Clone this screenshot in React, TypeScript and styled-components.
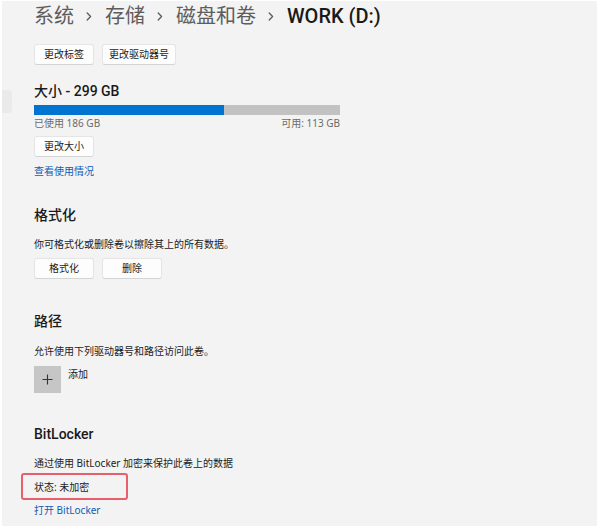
import styled, { createGlobalStyle } from "styled-components";

const GlobalStyle = createGlobalStyle`
  html, body {
    margin: 0;
    padding: 0;
    background: #f3f3f3;
  }
  * {
    box-sizing: border-box;
  }
`;

const headingFont = `"Roboto", "Noto Sans CJK SC", sans-serif`;

const Frame = styled.div`
  width: 600px;
  height: 526px;
  display: flex;
  background: #f3f3f3;
  border-top: 1px solid #ffffff;
  border-left: 2px solid #ffffff;
  border-right: 3px solid #ffffff;
  font-family: "Segoe UI", "Noto Sans", "Noto Sans CJK SC", sans-serif;
  color: #1b1b1b;
  overflow: hidden;
`;

const Sidebar = styled.nav`
  width: 10px;
  flex-shrink: 0;
  display: flex;
  flex-direction: column;
`;

const NavPill = styled.div`
  margin-top: 89px;
  width: 10px;
  height: 23px;
  background: #eaeaea;
  border-radius: 0 4px 4px 0;
`;

const Main = styled.main`
  flex: 1;
  padding-left: 22px;
  display: flex;
  flex-direction: column;
  align-items: flex-start;
`;

const Breadcrumb = styled.div`
  display: flex;
  align-items: center;
  gap: 12px;
  height: 30px;
  font-size: 20px;
  line-height: 30px;
  white-space: nowrap;
`;

const Crumb = styled.span<{ $current?: boolean }>`
  color: ${(p) => (p.$current ? "#1a1a1a" : "#5d5d5d")};
  font-family: ${(p) => (p.$current ? headingFont : "inherit")};
  font-weight: ${(p) => (p.$current ? 500 : 400)};
`;

const Chevron = () => (
  <svg width="6" height="9" viewBox="0 0 6 9" style={{ marginRight: 1 }}>
    <path d="M1.2 1 L4.6 4.5 L1.2 8" fill="none" stroke="#5d5d5d" strokeWidth="1.3" strokeLinecap="round" strokeLinejoin="round" />
  </svg>
);

const ButtonRow = styled.div<{ $mt: number }>`
  display: flex;
  gap: 8px;
  margin-top: ${(p) => p.$mt}px;
`;

const Button = styled.button`
  min-width: 60px;
  height: 21px;
  padding: 0 6px;
  background: #fdfdfd;
  border: 1px solid #e5e5e5;
  border-bottom-color: #d4d4d4;
  border-radius: 3px;
  font-family: inherit;
  font-size: 10px;
  color: #1b1b1b;
  line-height: 19px;
`;

const Heading = styled.h2<{ $mt: number }>`
  margin: ${(p) => p.$mt}px 0 0;
  font-family: ${headingFont};
  font-size: 14px;
  line-height: 20px;
  font-weight: 500;
  color: #1a1a1a;
`;

const Text = styled.p<{ $mt: number }>`
  margin: ${(p) => p.$mt}px 0 0;
  font-size: 10px;
  line-height: 14px;
  color: #1b1b1b;
  white-space: nowrap;
`;

const Link = styled.a<{ $mt: number }>`
  display: block;
  margin-top: ${(p) => p.$mt}px;
  font-size: 10px;
  line-height: 14px;
  color: #0f5cb5;
  text-decoration: none;
`;

const Bar = styled.div`
  margin-top: 4px;
  width: 306px;
  height: 10px;
  background: #c2c2c2;
  display: flex;
`;

const BarFill = styled.div`
  height: 100%;
  background: #0074d0;
`;

const UsageRow = styled.div`
  width: 306px;
  margin-top: 1px;
  display: flex;
  justify-content: space-between;
  font-size: 10px;
  line-height: 14px;
  color: #6a6a6a;
`;

const AddRow = styled.div`
  margin-top: 8px;
  display: flex;
  gap: 7px;
  align-items: flex-start;
`;

const AddTile = styled.div`
  width: 27px;
  height: 27px;
  background: #c6c6c6;
  display: flex;
  align-items: center;
  justify-content: center;
`;

const AddLabel = styled.span`
  font-size: 10px;
  line-height: 14px;
  margin-top: 1px;
`;

const StatusRow = styled.div`
  position: relative;
  margin-top: 10px;
  font-size: 10px;
  line-height: 14px;
`;

const Highlight = styled.div`
  position: absolute;
  left: -13px;
  top: -7px;
  width: 107px;
  height: 27px;
  border: 2px solid #e8606e;
  border-radius: 3px;
`;

export default function App() {
  const used = 186;
  const total = 299;
  return (
    <>
      <GlobalStyle />
      <Frame>
        <Sidebar>
          <NavPill />
        </Sidebar>
        <Main>
          <Breadcrumb>
            <Crumb>系统</Crumb>
            <Chevron />
            <Crumb>存储</Crumb>
            <Chevron />
            <Crumb>磁盘和卷</Crumb>
            <Chevron />
            <Crumb $current>WORK (D:)</Crumb>
          </Breadcrumb>

          <ButtonRow $mt={13}>
            <Button>更改标签</Button>
            <Button>更改驱动器号</Button>
          </ButtonRow>

          <Heading $mt={16}>大小 - 299 GB</Heading>
          <Bar>
            <BarFill style={{ width: `${(used / total) * 100}%` }} />
          </Bar>
          <UsageRow>
            <span>已使用 186 GB</span>
            <span>可用: 113 GB</span>
          </UsageRow>
          <ButtonRow $mt={6}>
            <Button>更改大小</Button>
          </ButtonRow>
          <Link $mt={7} href="#">查看使用情况</Link>

          <Heading $mt={27}>格式化</Heading>
          <Text $mt={12}>你可格式化或删除卷以擦除其上的所有数据。</Text>
          <ButtonRow $mt={7}>
            <Button>格式化</Button>
            <Button>删除</Button>
          </ButtonRow>

          <Heading $mt={32}>路径</Heading>
          <Text $mt={13}>允许使用下列驱动器号和路径访问此卷。</Text>
          <AddRow>
            <AddTile>
              <svg width="11" height="11" viewBox="0 0 11 11">
                <path d="M5.5 0.5 V10.5 M0.5 5.5 H10.5" stroke="#333" strokeWidth="1.1" />
              </svg>
            </AddTile>
            <AddLabel>添加</AddLabel>
          </AddRow>

          <Heading $mt={31}>BitLocker</Heading>
          <Text $mt={12}>通过使用 BitLocker 加密来保护此卷上的数据</Text>
          <StatusRow>
            状态: 未加密
            <Highlight />
          </StatusRow>
          <Link $mt={9} href="#">打开 BitLocker</Link>
        </Main>
      </Frame>
    </>
  );
}
